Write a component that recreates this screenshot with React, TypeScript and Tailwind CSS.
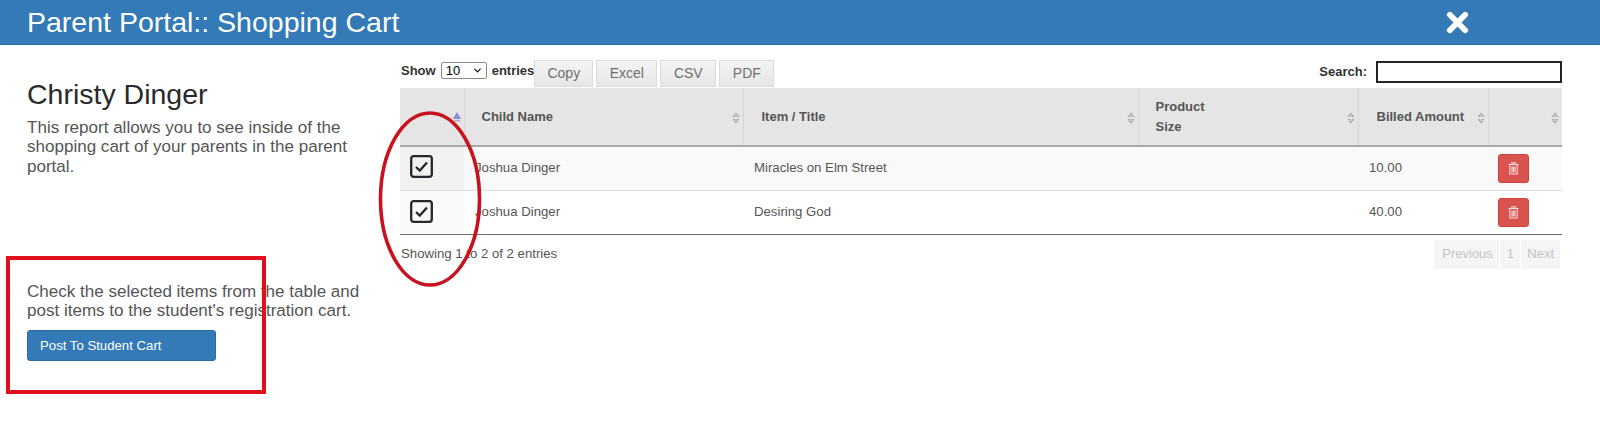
import { ChevronDown } from "lucide-react";

const COLS = ["w-[64px]", "w-[279px]", "w-[395px]", "w-[220px]", "w-[130px]", "w-[74px]"];

const ROWS = [
  { child: "Joshua Dinger", title: "Miracles on Elm Street", amount: "10.00", odd: true },
  { child: "Joshua Dinger", title: "Desiring God", amount: "40.00", odd: false },
];

function SortIcon({ active = false }: { active?: boolean }) {
  return (
    <svg width="8" height="12" viewBox="0 0 8 12" className="absolute right-[3px] top-[24px]">
      {active ? (
        <>
          <path d="M4 0 L8 7 H0 Z" fill="#8a8ad8" />
          <path d="M0.5 8 H7.5 L6.5 9.5 H1.5 Z" fill="#b4b4b4" />
        </>
      ) : (
        <>
          <path d="M4 0.5 L7.5 5 H0.5 Z" fill="#a8a8a8" />
          <path d="M0.5 7 H7.5 L4 11.5 Z" fill="#a8a8a8" />
          <path d="M4 2.5 L5.5 4.4 H2.5 Z M2.5 7.6 H5.5 L4 9.5 Z" fill="#e5e5e5" />
        </>
      )}
    </svg>
  );
}

function CheckMark() {
  return (
    <svg width="23" height="23" viewBox="0 0 23 23" fill="none" className="block">
      <rect x="1.2" y="1.2" width="20.6" height="20.6" rx="2.5" stroke="#26262b" strokeWidth="2.3" />
      <path d="M6 12 L9.8 15.6 L17 7.6" stroke="#26262b" strokeWidth="2.3" />
    </svg>
  );
}

function TrashIcon() {
  return (
    <svg width="11" height="13" viewBox="0 0 11 13" fill="none" stroke="#f6dcdc" strokeWidth="1.1">
      <path d="M0.5 2.5 H10.5" />
      <path d="M3.8 2.2 V0.8 H7.2 V2.2" />
      <path d="M1.8 2.8 V12 H9.2 V2.8" />
      <path d="M4 4.5 V10.5 M5.5 4.5 V10.5 M7 4.5 V10.5" />
    </svg>
  );
}

function ExportButton({ label, className }: { label: string; className: string }) {
  return (
    <button
      className={`${className} h-[27px] border border-[#dcdcdc] bg-gradient-to-b from-[#f4f4f4] to-[#e6e6e6] text-[14px] text-[#707070]`}
    >
      {label}
    </button>
  );
}

function HeaderCell({ className, children, active }: { className: string; children?: React.ReactNode; active?: boolean }) {
  return (
    <th className={`${className} relative h-[58px] border-r border-[#d6d6d6] p-0 text-left align-middle text-[13px] font-bold text-[#555] last:border-r-0`}>
      {children}
      <SortIcon active={active} />
    </th>
  );
}

export default function App() {
  return (
    <div className="relative h-[423px] w-[1600px] overflow-hidden bg-white font-['Liberation_Sans',Arial,sans-serif]">
      {/* Title bar */}
      <div className="flex h-[45px] items-center justify-between border-b border-[#2e6da4] bg-[#337ab7] pl-[27px] pr-[131px]">
        <h1 className="text-[28.5px] leading-none text-white">Parent Portal:: Shopping Cart</h1>
        <svg width="23" height="23" viewBox="0 0 24 24" stroke="white" strokeWidth="6" strokeLinecap="round">
          <path d="M4 4 L20 20 M20 4 L4 20" />
        </svg>
      </div>

      <div className="flex">
        {/* Left column */}
        <div className="w-[400px] shrink-0 pl-[27px]">
          <h2 className="mt-[32px] text-[28.5px] leading-[34px] text-[#2a2a2a]">Christy Dinger</h2>
          <p className="mt-[7px] w-[340px] text-[17.05px] leading-[19.3px] text-[#555]">
            This report allows you to see inside of the shopping cart of your parents in the parent portal.
          </p>
          <p className="mt-[106px] w-[345px] text-[17.05px] leading-[19.3px] text-[#555]">
            Check the selected items from the table and post items to the student's registration cart.
          </p>
          <button className="mt-[10px] flex h-[31px] w-[189px] items-center rounded-[3px] border border-[#2e6da4] bg-[#337ab7] pl-[12px] text-[13.2px] text-white">
            Post To Student Cart
          </button>
        </div>

        {/* Table column */}
        <div className="w-[1162px] shrink-0">
          <div className="flex h-[43px] items-start pl-[1px] pt-[15px]">
            <div className="mt-[1px] flex items-center text-[13px] font-bold text-[#333]">
              <span>Show</span>
              <span className="mx-[5px] flex h-[17px] w-[46px] items-center justify-between rounded-[2px] border border-[#8a8a8a] pl-[4px] pr-[3px] text-[13px] font-normal text-black">
                10
                <ChevronDown size={11} strokeWidth={2.5} />
              </span>
              <span>entries</span>
            </div>
            <div className="flex gap-[3px]">
              <ExportButton label="Copy" className="w-[59px]" />
              <ExportButton label="Excel" className="w-[61px]" />
              <ExportButton label="CSV" className="w-[56px]" />
              <ExportButton label="PDF" className="w-[55px]" />
            </div>
            <div className="ml-auto mt-[1px] flex items-center gap-[9px] text-[13px] font-bold text-[#333]">
              <span>Search:</span>
              <span className="h-[22px] w-[186px] border-2 border-[#222]" />
            </div>
          </div>

          <table className="w-[1162px] table-fixed border-collapse">
            <thead>
              <tr className="border-b-2 border-[#a9a9a9] bg-[#e5e5e5]">
                <HeaderCell className={COLS[0]} active />
                <HeaderCell className={`${COLS[1]} pl-[17px]`}>Child Name</HeaderCell>
                <HeaderCell className={`${COLS[2]} pl-[18px]`}>Item / Title</HeaderCell>
                <HeaderCell className={`${COLS[3]} pl-[17px] leading-[20px]`}>
                  Product
                  <br />
                  Size
                </HeaderCell>
                <HeaderCell className={`${COLS[4]} pl-[18px]`}>Billed Amount</HeaderCell>
                <HeaderCell className={COLS[5]} />
              </tr>
            </thead>
            <tbody className="text-[13.2px] text-[#555]">
              {ROWS.map((row) => (
                <tr key={row.title} className={`h-[44px] border-b ${row.odd ? "border-[#dedede] bg-[#f9f9f9]" : "border-[#6e6e6e] bg-white"}`}>
                  <td className={`p-0 ${row.odd ? "bg-[#f1f1f1]" : "bg-[#fafafa]"}`} />
                  <td className="p-0 pl-[11px]">{row.child}</td>
                  <td className="p-0 pl-[11px]">{row.title}</td>
                  <td className="p-0" />
                  <td className="p-0 pl-[11px]">{row.amount}</td>
                  <td className="p-0 pl-[10px]">
                    <span className="flex h-[29px] w-[31px] items-center justify-center rounded-[3px] border border-[#d43f3a] bg-[#d9534f]">
                      <TrashIcon />
                    </span>
                  </td>
                </tr>
              ))}
            </tbody>
          </table>

          <div className="flex items-start justify-between pl-[1px] pt-[5px]">
            <span className="pt-[4px] text-[13.2px] text-[#555]">Showing 1 to 2 of 2 entries</span>
            <div className="mr-[2px] flex h-[29px] items-center bg-[#f5f5f5] text-[13px] text-[#c4c4c4]">
              <span className="flex h-full w-[66px] items-center border-r border-white pl-[8px]">Previous</span>
              <span className="flex h-full w-[21px] items-center justify-center border-r border-white">1</span>
              <span className="flex h-full items-center px-[6px]">Next</span>
            </div>
          </div>
        </div>
      </div>

      {/* Annotations drawn over the screenshot */}
      <div className="absolute left-[6px] top-[256px] h-[138px] w-[260px] border-[4px] border-[#e0101c]" />
      <svg width="108" height="178" viewBox="0 0 108 178" fill="none" className="absolute left-[376px] top-[110px]">
        <ellipse cx="54" cy="89" rx="49.5" ry="86" stroke="#c8121f" strokeWidth="3.6" />
      </svg>
      <div className="absolute left-[410px] top-[155px]">
        <CheckMark />
      </div>
      <div className="absolute left-[410px] top-[200px]">
        <CheckMark />
      </div>
    </div>
  );
}
